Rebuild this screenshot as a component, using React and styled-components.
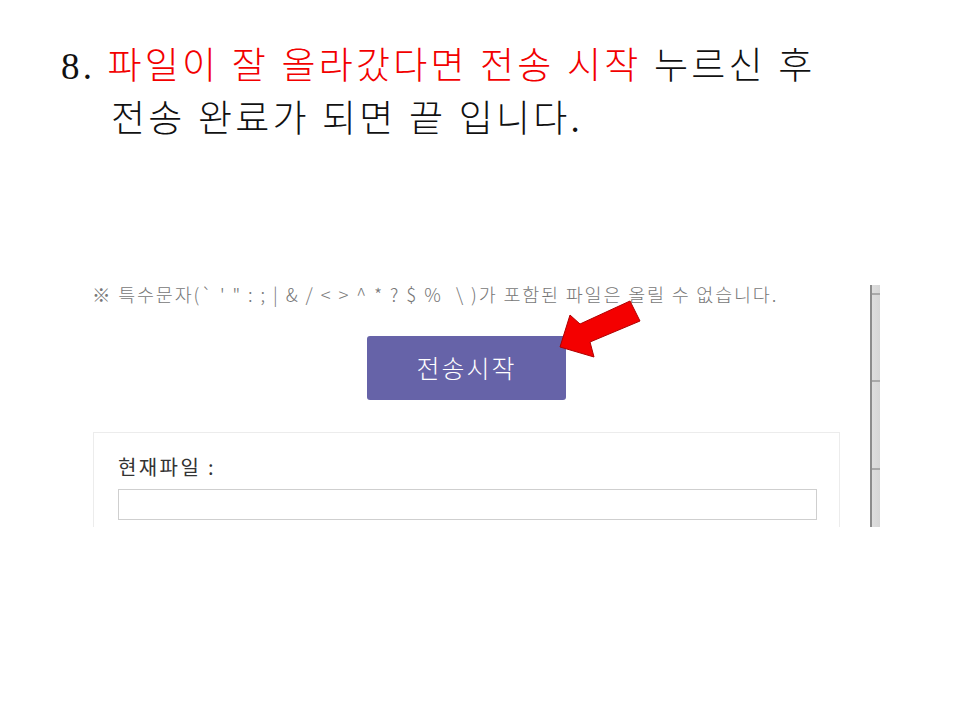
import React from 'react';
import styled, { createGlobalStyle } from 'styled-components';

const Global = createGlobalStyle`
  html, body {
    margin: 0;
    padding: 0;
    background: #fff;
  }
  body {
    width: 960px;
    height: 720px;
    overflow: hidden;
  }
`;

const Page = styled.div`
  width: 960px;
  height: 720px;
  background: #fff;
  padding-top: 40px;
  box-sizing: border-box;
`;

const Title = styled.div`
  padding-left: 61px;
  font-family: "Liberation Serif", "Noto Sans CJK KR", serif;
  font-size: 37px;
  font-weight: 300;
  line-height: 53px;
  color: #111;
  letter-spacing: 3.2px;
`;

const Line = styled.div`
  padding-left: ${(p) => p.indent || 0}px;
  white-space: nowrap;
`;

const Red = styled.span`
  color: #f20000;
`;

const Shot = styled.div`
  position: relative;
  margin: 134px 0 0 88px;
  width: 792px;
  height: 247px;
  display: flex;
  overflow: hidden;
`;

const Content = styled.div`
  flex: 1;
  padding: 0 30px 0 5px;
  font-family: "Noto Sans CJK KR", "Noto Sans", sans-serif;
`;

const Notice = styled.div`
  font-size: 18.5px;
  font-weight: 300;
  color: #777;
  line-height: 28px;
  letter-spacing: 1.8px;
  margin-left: -1px;
  white-space: nowrap;
`;

const Symbols = styled.span`
  word-spacing: 2.6px;
  letter-spacing: 0.6px;
`;

const ButtonRow = styled.div`
  display: flex;
  justify-content: center;
  margin-top: 28px;
`;

const SendButton = styled.button`
  width: 199px;
  height: 64px;
  border: none;
  border-radius: 3px;
  background: #6663a8;
  color: #fff;
  font-family: "Noto Sans CJK KR", sans-serif;
  font-size: 25px;
  font-weight: 300;
  letter-spacing: 2px;
  padding: 0 0 2px;
`;

const Box = styled.div`
  margin-top: 32px;
  border: 1px solid #ececec;
  padding: 21px 22px 20px 24px;
`;

const Label = styled.div`
  font-size: 20px;
  color: #333;
  line-height: 26px;
  letter-spacing: 2.4px;
  margin-bottom: 9px;
`;

const Field = styled.div`
  height: 29px;
  border: 1px solid #cfcfcf;
`;

const Scrollbar = styled.div`
  width: 10px;
  margin-top: 5px;
  background: linear-gradient(to right, #8c8c8c 0, #8c8c8c 2px, #dedede 2px, #d6d6d6 100%);
  position: relative;
`;

const Tick = styled.div`
  position: absolute;
  left: 2px;
  right: 0;
  top: ${(p) => p.y}px;
  height: 2px;
  background: #a9a9a9;
`;

const Arrow = styled.svg`
  position: absolute;
  left: 468px;
  top: 17px;
`;

export default function App() {
  return (
    <Page>
      <Global />
      <Title>
        <Line>
          8. <Red>파일이 잘 올라갔다면 전송 시작</Red> 누르신 후
        </Line>
        <Line indent={50}>전송 완료가 되면 끝 입니다.</Line>
      </Title>
      <Shot>
        <Content>
          <Notice>
            ※ 특수문자(<Symbols>` ' " : ; | &amp; / &lt; &gt; ^ * ? $ % &nbsp;\ </Symbols>)가 포함된 파일은 올릴 수 없습니다.
          </Notice>
          <ButtonRow>
            <SendButton>전송시작</SendButton>
          </ButtonRow>
          <Box>
            <Label>현재파일 :</Label>
            <Field />
          </Box>
        </Content>
        <Scrollbar>
          <Tick y={8} />
          <Tick y={95} />
          <Tick y={183} />
        </Scrollbar>
        <Arrow width="90" height="70" viewBox="0 0 90 70">
          <polygon
            points="4,50 14,18 24,27 74,4 84,24 34,45 38,60"
            fill="#f40000"
            stroke="#b00000"
            strokeWidth="1"
            strokeLinejoin="miter"
          />
        </Arrow>
      </Shot>
    </Page>
  );
}
